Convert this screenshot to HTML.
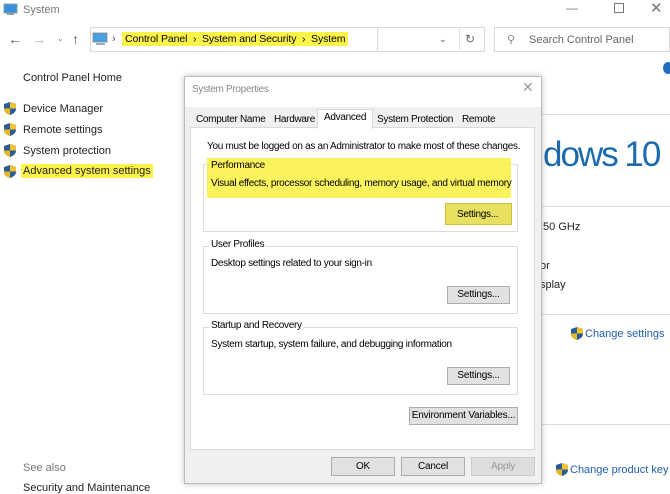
<!DOCTYPE html>
<html><head><meta charset="utf-8"><style>
*{margin:0;padding:0;box-sizing:border-box}
body{width:670px;height:489px;overflow:hidden;background:#fff;font-family:"Liberation Sans",sans-serif;position:relative;color:#000}
.a{position:absolute;white-space:nowrap}
.s{font-size:11px}
.t{font-size:10px;letter-spacing:-0.3px}
.hl{background:#fbf24a}
.btn{position:absolute;background:#e1e1e1;border:1px solid #adadad;font-size:10px;letter-spacing:-0.2px;text-align:center;white-space:nowrap}
.grp{position:absolute;border:1px solid #dcdcdc}
.lbl{position:absolute;background:#fff;font-size:10px;letter-spacing:-0.3px;padding:0 2px}
</style></head><body>
<svg class="a" style="left:3px;top:3px" width="16" height="13"><rect x="1" y="1" width="13" height="9" fill="#3b8ed8" stroke="#7aa" stroke-width="1"/><rect x="4" y="10" width="7" height="2" fill="#999"/></svg>
<div class="a s" style="left:23px;top:4px;color:#777">System</div>
<div class="a" style="left:566px;top:1px;color:#777;font-size:12px">—</div>
<div class="a" style="left:614px;top:3px;width:10px;height:10px;border:1px solid #777"></div>
<div class="a" style="left:650px;top:-1px;color:#777;font-size:15px">✕</div>
<div class="a" style="left:8px;top:31px;color:#555;font-size:14px">←</div>
<div class="a" style="left:32px;top:31px;color:#bbb;font-size:14px">→</div>
<div class="a" style="left:57px;top:34px;color:#777;font-size:8px">⌄</div>
<div class="a" style="left:72px;top:31px;color:#555;font-size:14px">↑</div>
<div class="a" style="left:90px;top:27px;width:288px;height:25px;border:1px solid #d9d9d9"></div>
<div class="a" style="left:377px;top:27px;width:108px;height:25px;border:1px solid #d9d9d9"></div>
<div class="a" style="left:459px;top:27px;width:1px;height:25px;background:#e4e4e4"></div>
<svg class="a" style="left:92px;top:32px" width="17" height="14"><rect x="1" y="1" width="14" height="9" fill="#4aa0e0" stroke="#888" stroke-width="0.8"/><rect x="4" y="11" width="9" height="2" fill="#9ac"/></svg>
<div class="a s" style="left:112px;top:33px;color:#555">›</div>
<div class="a hl" style="left:122px;top:32px;padding:1px 3px;font-size:10.5px;letter-spacing:-0.1px">Control Panel &nbsp;›&nbsp; System and Security &nbsp;›&nbsp; System</div>
<div class="a" style="left:439px;top:34px;color:#555;font-size:9px">⌄</div>
<div class="a" style="left:465px;top:32px;color:#666;font-size:12px">↻</div>
<div class="a" style="left:494px;top:27px;width:176px;height:25px;border:1px solid #d9d9d9"></div>
<div class="a s" style="left:507px;top:33px;color:#888">⚲</div>
<div class="a s" style="left:529px;top:34px;color:#666">Search Control Panel</div>
<div class="a" style="left:663px;top:62px;width:10px;height:12px;border-radius:50%;background:#1f6fc0"></div>
<div class="a s" style="left:23px;top:72px;color:#222">Control Panel Home</div>
<svg width="0" height="0"><defs><g id="sh"><path d="M6 0 L12 2 L12 7 Q12 11 6 13 Q0 11 0 7 L0 2 Z" fill="#2a5d96"/><path d="M6 0 L12 2 L12 6.5 L6 6.5 Z" fill="#f1c232"/><path d="M0 6.5 L6 6.5 L6 13 Q0 11 0 7Z" fill="#e8b820"/></g></defs></svg>
<svg class="a" style="left:4px;top:102px" width="12" height="13"><use href="#sh"/></svg>
<svg class="a" style="left:4px;top:123px" width="12" height="13"><use href="#sh"/></svg>
<svg class="a" style="left:4px;top:144px" width="12" height="13"><use href="#sh"/></svg>
<svg class="a" style="left:4px;top:165px" width="12" height="13"><use href="#sh"/></svg>
<div class="a s" style="left:23px;top:103px;color:#222">Device Manager</div>
<div class="a s" style="left:23px;top:124px;color:#222">Remote settings</div>
<div class="a s" style="left:23px;top:145px;color:#222">System protection</div>
<div class="a s hl" style="left:21px;top:164px;padding:1px 2px;color:#222">Advanced system settings</div>
<div class="a s" style="left:23px;top:462px;color:#777">See also</div>
<div class="a s" style="left:23px;top:482px;color:#222">Security and Maintenance</div>
<div class="a" style="left:540px;top:114px;width:130px;height:1px;background:#ddd"></div>
<div class="a" style="left:540px;top:206px;width:130px;height:1px;background:#ddd"></div>
<div class="a" style="left:540px;top:314px;width:130px;height:1px;background:#ddd"></div>
<div class="a" style="left:540px;top:424px;width:130px;height:1px;background:#ddd"></div>
<div class="a" style="left:543px;top:135px;color:#1b6aad;font-size:35px;letter-spacing:-2px">dows 10</div>
<div class="a s" style="left:540px;top:221px;color:#222">.50 GHz</div>
<div class="a s" style="left:540px;top:260px;color:#222">or</div>
<div class="a s" style="left:540px;top:279px;color:#222">splay</div>
<svg class="a" style="left:571px;top:327px" width="12" height="13"><use href="#sh"/></svg>
<div class="a s" style="left:585px;top:328px;color:#1f5fa8">Change settings</div>
<svg class="a" style="left:556px;top:463px" width="12" height="13"><use href="#sh"/></svg>
<div class="a s" style="left:570px;top:464px;color:#1f5fa8">Change product key</div>
<div class="a" style="left:184px;top:76px;width:358px;height:408px;background:#f0f0f0;border:1px solid #bbb;box-shadow:0 0 6px rgba(0,0,0,.25)"></div>
<div class="a" style="left:185px;top:77px;width:356px;height:30px;background:#fff"></div>
<div class="a t" style="left:192px;top:84px;color:#888">System Properties</div>
<div class="a" style="left:522px;top:79px;color:#999;font-size:14px">✕</div>
<div class="a" style="left:190px;top:127px;width:345px;height:323px;background:#fff;border:1px solid #d9d9d9"></div>
<div class="a t" style="left:196px;top:114px">Computer Name</div>
<div class="a t" style="left:274px;top:114px">Hardware</div>
<div class="a" style="left:317px;top:109px;width:56px;height:20px;background:#fff;border:1px solid #d9d9d9;border-bottom:none"></div>
<div class="a t" style="left:324px;top:112px">Advanced</div>
<div class="a t" style="left:377px;top:114px">System Protection</div>
<div class="a t" style="left:462px;top:114px">Remote</div>
<div class="a t" style="left:207px;top:141px">You must be logged on as an Administrator to make most of these changes.</div>
<div class="grp" style="left:203px;top:164px;width:315px;height:68px"></div>
<div class="a" style="left:207px;top:158px;width:304px;height:40px;background:#fbf24a;opacity:.9"></div>
<div class="a t" style="left:211px;top:160px">Performance</div>
<div class="a t" style="left:211px;top:178px">Visual effects, processor scheduling, memory usage, and virtual memory</div>
<div class="a" style="left:445px;top:203px;width:67px;height:22px;background:#e8e060;border:1px solid #c9c040"></div>
<div class="a t" style="left:457px;top:209px">Settings...</div>
<div class="grp" style="left:203px;top:246px;width:315px;height:68px"></div>
<div class="lbl" style="left:209px;top:239px">User Profiles</div>
<div class="a t" style="left:211px;top:258px">Desktop settings related to your sign-in</div>
<div class="btn" style="left:447px;top:286px;width:63px;height:18px;line-height:16px">Settings...</div>
<div class="grp" style="left:203px;top:327px;width:315px;height:68px"></div>
<div class="lbl" style="left:209px;top:320px">Startup and Recovery</div>
<div class="a t" style="left:211px;top:339px">System startup, system failure, and debugging information</div>
<div class="btn" style="left:447px;top:367px;width:63px;height:18px;line-height:16px">Settings...</div>
<div class="btn" style="left:409px;top:407px;width:109px;height:18px;line-height:16px">Environment Variables...</div>
<div class="btn" style="left:331px;top:457px;width:64px;height:19px;line-height:17px">OK</div>
<div class="btn" style="left:401px;top:457px;width:64px;height:19px;line-height:17px">Cancel</div>
<div class="btn" style="left:471px;top:457px;width:64px;height:19px;line-height:17px;color:#999;border-color:#ccc;background:#ddd">Apply</div>
</body></html>
